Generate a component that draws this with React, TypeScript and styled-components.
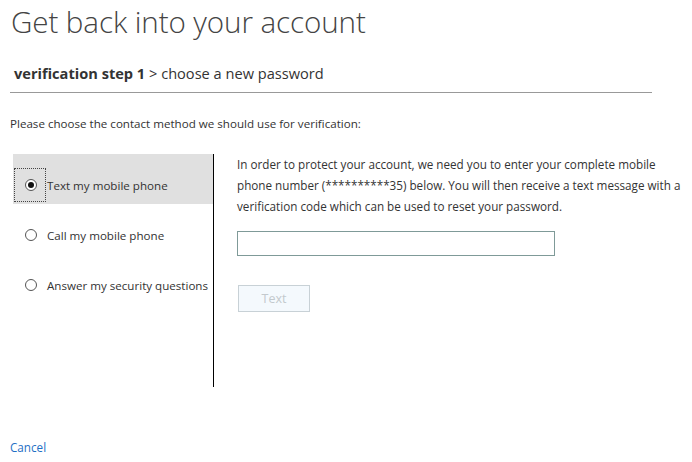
import React from "react";
import styled, { createGlobalStyle } from "styled-components";

const Global = createGlobalStyle`
  html, body { margin: 0; padding: 0; background: #fff; }
  body { font-family: "Open Sans", "Noto Sans", sans-serif; color: #333; }
`;

const Page = styled.div`
  width: 692px;
  height: 462px;
  padding: 0 0 0 10px;
  box-sizing: border-box;
  display: flex;
  flex-direction: column;
`;

const Title = styled.h1`
  margin: 0;
  padding: 2px 0 0 1px;
  font-size: 29.6px;
  font-weight: 300;
  line-height: 40px;
  color: #444;
  letter-spacing: -0.1px;
`;

const Steps = styled.div`
  margin-top: 21px;
  width: 642px;
  padding: 0 0 9px 4px;
  box-sizing: border-box;
  border-bottom: 1px solid #999;
  font-size: 14.6px;
  line-height: 20px;
  color: #333;
`;

const Current = styled.span`
  font-weight: 700;
`;

const Intro = styled.p`
  margin: 23px 0 0 0;
  font-size: 11.6px;
  line-height: 16px;
  color: #333;
`;

const Body = styled.div`
  margin-top: 22px;
  display: flex;
`;

const Methods = styled.div`
  width: 200px;
  margin-left: 3px;
  height: 233px;
  border-right: 1px solid #000;
  display: flex;
  flex-direction: column;
`;

const Method = styled.label<{ $selected?: boolean }>`
  height: 50px;
  box-sizing: border-box;
  padding: 12px 0 0 4px;
  display: flex;
  align-items: center;
  background: ${(p) => (p.$selected ? "#e0e0e0" : "transparent")};
  font-size: 11.6px;
  color: #333;
  cursor: pointer;
`;

const RadioWrap = styled.span<{ $focus?: boolean }>`
  width: 32px;
  height: 34px;
  box-sizing: border-box;
  display: flex;
  align-items: center;
  justify-content: center;
  border: 1px dotted ${(p) => (p.$focus ? "#444" : "transparent")};
  margin: 0 1px 0 -3px;
  padding-left: 2px;
`;

const Radio = styled.span<{ $checked?: boolean }>`
  width: 12px;
  height: 12px;
  box-sizing: border-box;
  border-radius: 50%;
  border: 1px solid #555;
  background: #fff;
  display: flex;
  align-items: center;
  justify-content: center;
  &::after {
    content: "";
    width: 6px;
    height: 6px;
    border-radius: 50%;
    background: ${(p) => (p.$checked ? "#111" : "transparent")};
  }
`;

const Detail = styled.div`
  padding: 0 0 0 23px;
  width: 452px;
  display: flex;
  flex-direction: column;
`;

const Para = styled.p`
  margin: 0;
  font-size: 11.7px;
  line-height: 21px;
  color: #333;
`;

const PhoneInput = styled.input`
  margin-top: 14px;
  width: 318px;
  height: 25px;
  box-sizing: border-box;
  border: 1px solid #7f9a98;
  outline: none;
  padding: 0 6px;
  font-family: inherit;
  font-size: 12px;
`;

const SendButton = styled.button`
  margin: 29px 0 0 1px;
  width: 72px;
  height: 27px;
  border: 1px solid #c8d1d6;
  background: #f4f9fd;
  color: #c3c9cd;
  font-family: inherit;
  font-size: 12.5px;
  padding: 0;
`;

const Footer = styled.div`
  margin-top: 48px;
`;

const CancelLink = styled.a`
  color: #1f6fc5;
  font-size: 11.7px;
  text-decoration: none;
`;

const methods = [
  { id: "text", label: "Text my mobile phone" },
  { id: "call", label: "Call my mobile phone" },
  { id: "questions", label: "Answer my security questions" },
];

export default function App() {
  const selected = "text";
  return (
    <>
      <Global />
      <Page>
        <Title>Get back into your account</Title>
        <Steps>
          <Current>verification step 1</Current> &gt; choose a new password
        </Steps>
        <Intro>Please choose the contact method we should use for verification:</Intro>
        <Body>
          <Methods>
            {methods.map((m) => (
              <Method key={m.id} $selected={m.id === selected}>
                <RadioWrap $focus={m.id === selected}>
                  <Radio $checked={m.id === selected} />
                </RadioWrap>
                {m.label}
              </Method>
            ))}
          </Methods>
          <Detail>
            <Para>
              In order to protect your account, we need you to enter your complete mobile phone number
              (**********35) below. You will then receive a text message with a verification code which
              can be used to reset your password.
            </Para>
            <PhoneInput type="text" />
            <div>
              <SendButton disabled>Text</SendButton>
            </div>
          </Detail>
        </Body>
        <Footer>
          <CancelLink href="#">Cancel</CancelLink>
        </Footer>
      </Page>
    </>
  );
}
